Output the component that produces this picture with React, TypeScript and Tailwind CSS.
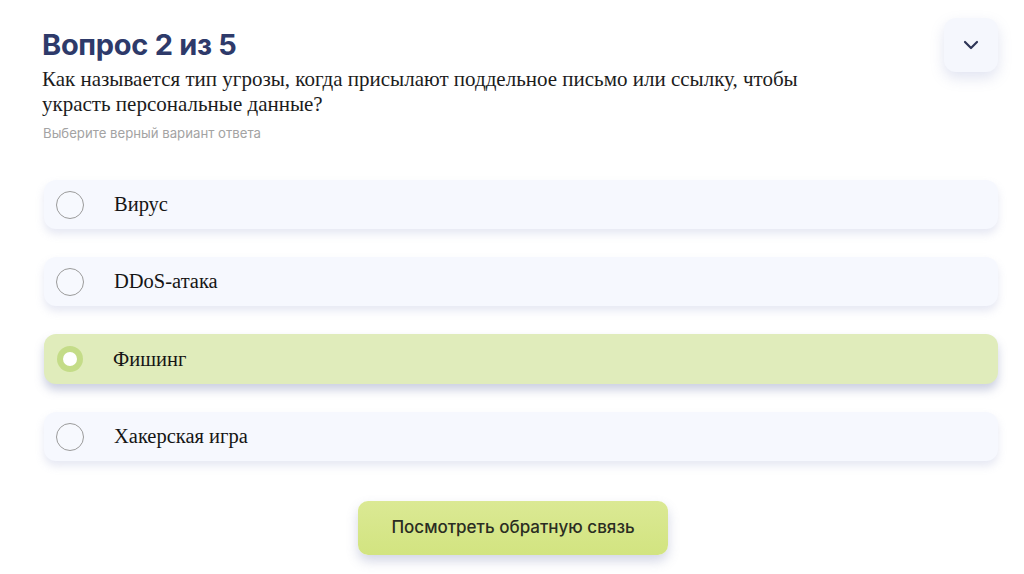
import React, { useState } from 'react';

const options = ['Вирус', 'DDoS-атака', 'Фишинг', 'Хакерская игра'];

const Radio: React.FC<{ checked: boolean }> = ({ checked }) =>
  checked ? (
    <span className="flex h-[26px] w-[26px] items-center justify-center rounded-full bg-[#c4dc88]">
      <span className="h-[14px] w-[14px] rounded-full bg-white" />
    </span>
  ) : (
    <span className="h-[28px] w-[28px] rounded-full border border-[#9b9b9b] bg-[#f7f9fe]" />
  );

export default function App() {
  const [selected, setSelected] = useState<number>(2);

  return (
    <div className="h-[574px] w-[1024px] overflow-hidden bg-white">
      <div className="flex flex-col px-[42px] pt-[27px]">
        <div className="flex items-start justify-between">
          <div className="flex flex-col">
            <h1 className="font-['Inter',sans-serif] text-[29px] font-bold leading-[36px] tracking-[-0.3px] text-[#2e3a6a]">
              Вопрос 2 из 5
            </h1>
            <p className="mt-[4px] max-w-[800px] font-['Liberation_Serif',serif] text-[21px] leading-[25px] text-[#1c1c1c]">
              Как называется тип угрозы, когда присылают поддельное письмо или ссылку, чтобы украсть
              персональные данные?
            </p>
            <p className="mt-[7px] pl-[1px] font-['Inter',sans-serif] text-[13.2px] leading-[18px] text-[#a3a3a3]">
              Выберите верный вариант ответа
            </p>
          </div>
          <button className="-mt-[9px] mr-[-16px] flex h-[54px] w-[54px] items-center justify-center rounded-[12px] bg-[#f5f7fd] shadow-[0_6px_14px_rgba(120,130,190,0.22)]">
            <svg width="16" height="10" viewBox="0 0 16 10" fill="none">
              <path d="M2 2l6 6 6-6" stroke="#2e3557" strokeWidth="2.2" strokeLinecap="round" strokeLinejoin="round" />
            </svg>
          </button>
        </div>

        <div className="mt-[38px] flex flex-col gap-[28px] pl-[2px]">
          {options.map((o, i) => {
            const active = i === selected;
            return (
              <button
                key={o}
                onClick={() => setSelected(i)}
                className={
                  active
                    ? 'flex h-[50px] w-[954px] items-center rounded-[12px] bg-[#e0ecbb] pl-[13px] text-left shadow-[0_6px_10px_rgba(110,120,170,0.35)]'
                    : 'flex h-[49px] w-[954px] items-center rounded-[12px] bg-[#f6f8fe] pl-[12px] text-left shadow-[0_5px_8px_rgba(140,150,200,0.22)]'
                }
              >
                <Radio checked={active} />
                <span className="ml-[30px] font-['Liberation_Serif',serif] text-[20.5px] text-[#151515]">{o}</span>
              </button>
            );
          })}
        </div>

        <div className="mt-[40px] flex justify-center">
          <button className="ml-[2px] h-[54px] w-[310px] rounded-[10px] bg-gradient-to-b from-[#dbe994] to-[#d2e480] font-['Inter',sans-serif] text-[17px] font-medium text-[#2a2d22] shadow-[0_6px_12px_rgba(110,120,170,0.3)]">
            Посмотреть обратную связь
          </button>
        </div>
      </div>
    </div>
  );
}
